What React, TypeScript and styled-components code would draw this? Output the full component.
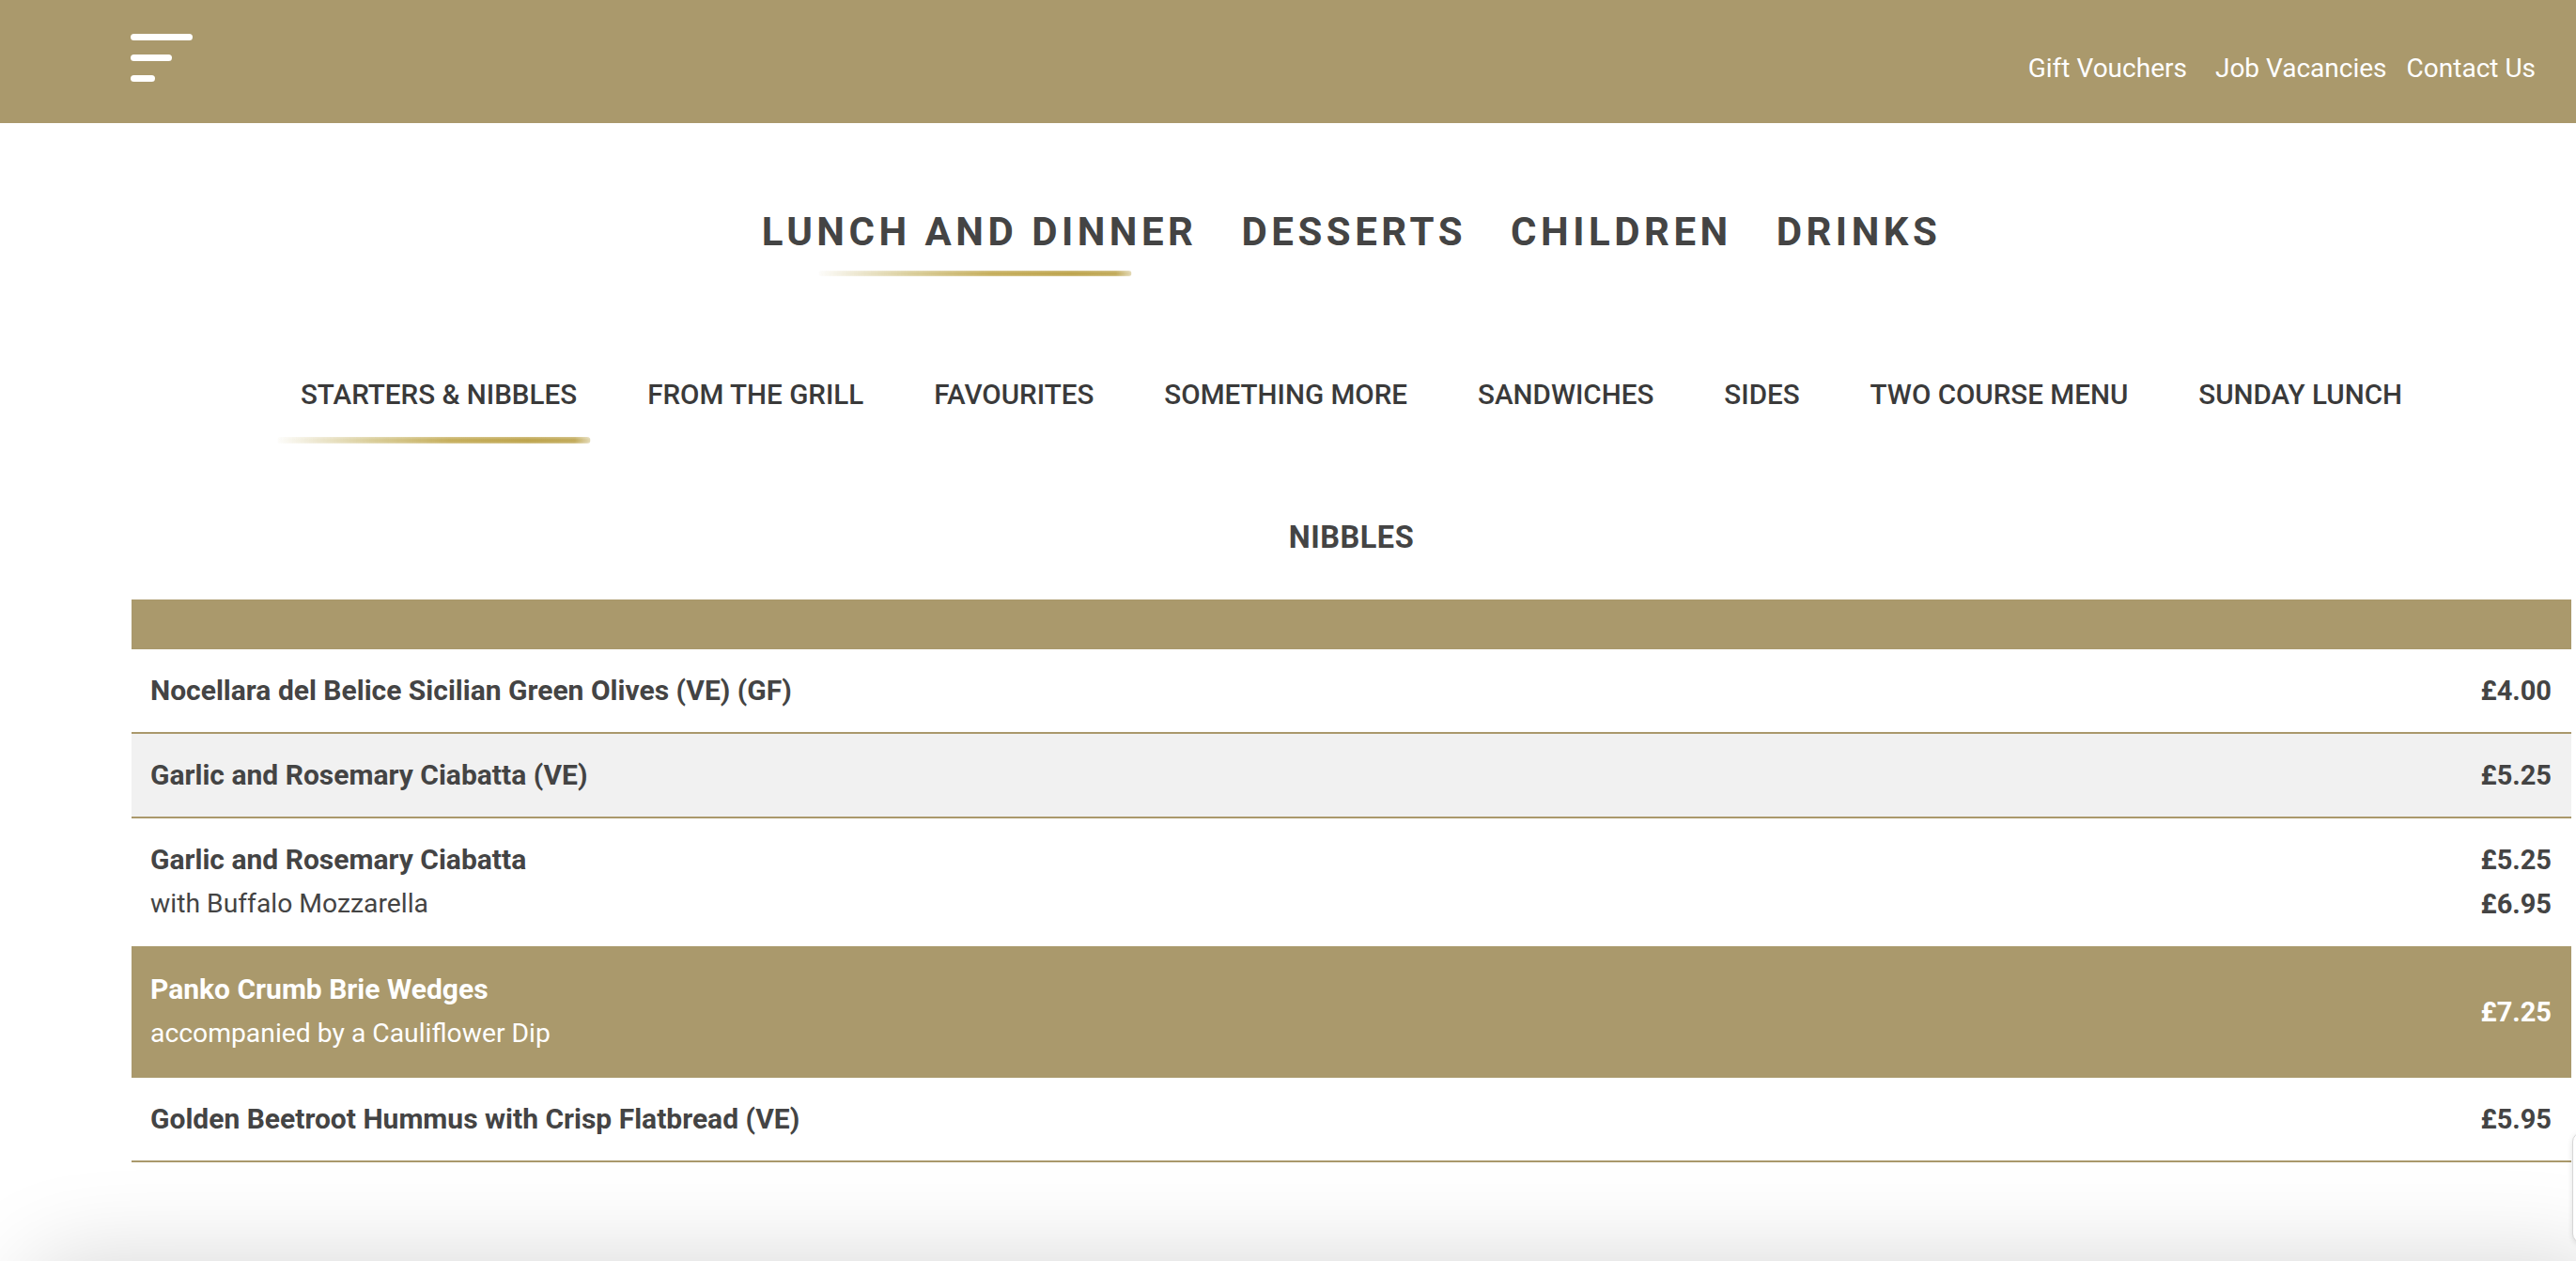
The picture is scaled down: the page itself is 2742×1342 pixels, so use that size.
import React from "react";
import styled, { createGlobalStyle, css } from "styled-components";

const GOLD = "#aa996c";
const TEXT = "#444444";

const GlobalStyle = createGlobalStyle`
  html, body {
    margin: 0;
    padding: 0;
    background: #ffffff;
  }
  body {
    font-family: Roboto, "Liberation Sans", Arial, sans-serif;
    color: ${TEXT};
    overflow: hidden;
  }
  * { box-sizing: border-box; }
`;

const Page = styled.div`
  width: 100%;
  min-height: 1342px;
  position: relative;
`;

const Header = styled.header`
  height: 131px;
  background: ${GOLD};
  display: flex;
  justify-content: space-between;
  align-items: flex-start;
  padding: 36px 43px 0 139px;
`;

const Burger = styled.button`
  display: flex;
  flex-direction: column;
  gap: 15px;
  padding: 0;
  border: 0;
  background: transparent;
  cursor: pointer;
`;

const BurgerLine = styled.span<{ $w: number }>`
  display: block;
  width: ${(p) => p.$w}px;
  height: 7px;
  border-radius: 4px;
  background: #ffffff;
`;

const TopLinks = styled.nav`
  display: flex;
  gap: 21px;
  margin-top: 20px;
`;

const TopLink = styled.a`
  font-family: Roboto, "Liberation Sans", sans-serif;
  font-size: 28px;
  line-height: 34px;
  color: #ffffff;
  text-decoration: none;
  &:first-child {
    margin-right: 9px;
  }
`;

const Main = styled.main`
  padding: 0 5px 0 140px;
`;

const brush = css`
  content: "";
  position: absolute;
  left: 50%;
  width: 333px;
  transform: translateX(calc(-50% - 5px));
  border-radius: 3px 4px 4px 3px;
  background:
    linear-gradient(180deg, rgba(255,255,255,0.3) 0%, rgba(255,255,255,0) 40%, rgba(255,255,255,0) 70%, rgba(255,255,255,0.35) 100%),
    linear-gradient(90deg,
      rgba(214, 202, 160, 0.05) 0%,
      rgba(210, 196, 140, 0.4) 12%,
      rgba(201, 184, 110, 0.7) 30%,
      #c6af5e 55%,
      #bea54f 80%,
      #c2ab5c 95%,
      rgba(200, 180, 110, 0.5) 100%);
`;

const MainNav = styled.nav`
  display: flex;
  justify-content: center;
  gap: 47px;
  padding-top: 95px;
`;

const MainTab = styled.a<{ $active?: boolean }>`
  position: relative;
  display: block;
  font-family: Roboto, "Liberation Sans", sans-serif;
  font-weight: 700;
  font-size: 42px;
  line-height: 42px;
  letter-spacing: 4.5px;
  color: ${TEXT};
  text-decoration: none;
  padding-bottom: 26px;
  ${(p) =>
    p.$active &&
    css`
      &::after {
        ${brush};
        bottom: 0;
        height: 6px;
      }
    `}
`;

const SubNav = styled.nav`
  display: flex;
  justify-content: center;
  gap: 75px;
  margin-top: 109px;
`;

const SubTab = styled.a<{ $active?: boolean }>`
  position: relative;
  display: block;
  font-family: Roboto, "Liberation Sans", sans-serif;
  font-weight: 500;
  font-size: 29.6px;
  line-height: 34px;
  color: #3a3a3a;
  text-decoration: none;
  padding-bottom: 35px;
  white-space: nowrap;
  ${(p) =>
    p.$active &&
    css`
      &::after {
        ${brush};
        bottom: 0;
        height: 7px;
      }
    `}
`;

const SectionTitle = styled.h2`
  margin: 80px 0 46px;
  text-align: center;
  font-family: Roboto, "Liberation Sans", sans-serif;
  font-weight: 700;
  font-size: 32.5px;
  line-height: 40px;
  letter-spacing: 0.5px;
  color: ${TEXT};
`;

const MenuTable = styled.div`
  display: flex;
  flex-direction: column;
`;

const TableHead = styled.div`
  height: 53px;
  background: ${GOLD};
`;

type Variant = "plain" | "gray" | "gold";

const Row = styled.div<{ $variant: Variant }>`
  display: flex;
  justify-content: space-between;
  align-items: center;
  padding: 20px 21px 20px 20px;
  border-bottom: 2px solid ${GOLD};
  background: ${(p) =>
    p.$variant === "gray" ? "#f1f1f1" : p.$variant === "gold" ? GOLD : "#ffffff"};
  color: ${(p) => (p.$variant === "gold" ? "#ffffff" : TEXT)};
`;

const NameCol = styled.div`
  display: flex;
  flex-direction: column;
`;

const ItemName = styled.span`
  font-family: Roboto, "Liberation Sans", sans-serif;
  font-weight: 700;
  font-size: 30px;
  line-height: 48px;
`;

const ItemDesc = styled.span`
  font-family: Roboto, "Liberation Sans", sans-serif;
  font-weight: 400;
  font-size: 28.3px;
  line-height: 46px;
  margin-bottom: 2px;
`;

const PriceCol = styled.div`
  display: flex;
  flex-direction: column;
  align-items: flex-end;
`;

const Price = styled.span`
  font-family: Roboto, "Liberation Sans", sans-serif;
  font-weight: 700;
  font-size: 29px;
  line-height: 48px;
  & + & {
    line-height: 46px;
    margin-bottom: 2px;
  }
`;

const BottomShade = styled.div`
  position: fixed;
  left: 30px;
  right: -40px;
  top: 1342px;
  height: 300px;
  border-radius: 48px;
  background: #ffffff;
  box-shadow: 0 0 100px rgba(0, 0, 0, 0.17);
  pointer-events: none;
`;

const SideWidget = styled.div`
  position: fixed;
  left: 2738px;
  top: 1205px;
  width: 120px;
  height: 118px;
  border: 1px solid #d6d6d6;
  border-radius: 10px;
  background: #ffffff;
  box-shadow: 0 2px 6px rgba(0, 0, 0, 0.12);
`;

type Item = {
  name: string;
  desc?: string;
  prices: string[];
  variant: Variant;
};

const items: Item[] = [
  { name: "Nocellara del Belice Sicilian Green Olives (VE) (GF)", prices: ["£4.00"], variant: "plain" },
  { name: "Garlic and Rosemary Ciabatta (VE)", prices: ["£5.25"], variant: "gray" },
  { name: "Garlic and Rosemary Ciabatta", desc: "with Buffalo Mozzarella", prices: ["£5.25", "£6.95"], variant: "plain" },
  { name: "Panko Crumb Brie Wedges", desc: "accompanied by a Cauliflower Dip", prices: ["£7.25"], variant: "gold" },
  { name: "Golden Beetroot Hummus with Crisp Flatbread (VE)", prices: ["£5.95"], variant: "plain" },
];

const mainTabs = ["LUNCH AND DINNER", "DESSERTS", "CHILDREN", "DRINKS"];
const subTabs = [
  "STARTERS & NIBBLES",
  "FROM THE GRILL",
  "FAVOURITES",
  "SOMETHING MORE",
  "SANDWICHES",
  "SIDES",
  "TWO COURSE MENU",
  "SUNDAY LUNCH",
];

export default function App() {
  return (
    <Page>
      <GlobalStyle />
      <Header>
        <Burger aria-label="Menu">
          <BurgerLine $w={66} />
          <BurgerLine $w={44} />
          <BurgerLine $w={26} />
        </Burger>
        <TopLinks>
          <TopLink href="#">Gift Vouchers</TopLink>
          <TopLink href="#">Job Vacancies</TopLink>
          <TopLink href="#">Contact Us</TopLink>
        </TopLinks>
      </Header>
      <Main>
        <MainNav>
          {mainTabs.map((t, i) => (
            <MainTab key={t} href="#" $active={i === 0}>
              {t}
            </MainTab>
          ))}
        </MainNav>
        <SubNav>
          {subTabs.map((t, i) => (
            <SubTab key={t} href="#" $active={i === 0}>
              {t}
            </SubTab>
          ))}
        </SubNav>
        <SectionTitle>NIBBLES</SectionTitle>
        <MenuTable>
          <TableHead />
          {items.map((it) => (
            <Row key={it.name + it.variant} $variant={it.variant}>
              <NameCol>
                <ItemName>{it.name}</ItemName>
                {it.desc && <ItemDesc>{it.desc}</ItemDesc>}
              </NameCol>
              <PriceCol>
                {it.prices.map((p) => (
                  <Price key={p}>{p}</Price>
                ))}
              </PriceCol>
            </Row>
          ))}
        </MenuTable>
      </Main>
      <BottomShade />
      <SideWidget />
    </Page>
  );
}
